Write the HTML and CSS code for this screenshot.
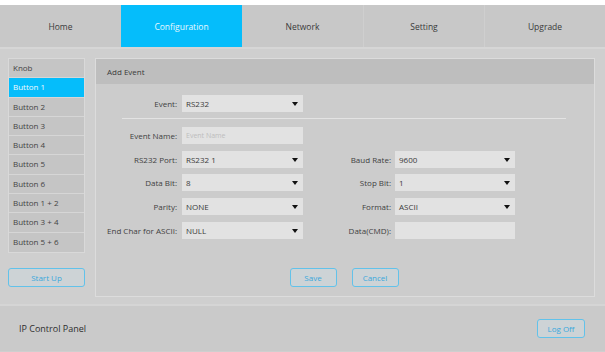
FILE: index.html
```html
<!DOCTYPE html>
<html lang="en">
<head>
    <meta charset="UTF-8">
    <meta name="viewport" content="width=device-width, initial-scale=1.0">
    <title>IP Control Panel</title>
    <link rel="stylesheet" href="styles.css">
</head>
<body>
    <div class="nav">
        <a href="#" class="nav-item">Home</a>
        <a href="#" class="nav-item active">Configuration</a>
        <a href="#" class="nav-item">Network</a>
        <a href="#" class="nav-item">Setting</a>
        <a href="#" class="nav-item">Upgrade</a>
    </div>
    <div class="main">
        <div class="side">
            <div class="side-list">
                <div class="side-item">Knob</div>
                <div class="side-item active">Button 1</div>
                <div class="side-item">Button 2</div>
                <div class="side-item">Button 3</div>
                <div class="side-item">Button 4</div>
                <div class="side-item">Button 5</div>
                <div class="side-item">Button 6</div>
                <div class="side-item">Button 1 + 2</div>
                <div class="side-item">Button 3 + 4</div>
                <div class="side-item">Button 5 + 6</div>
            </div>
            <a href="#" class="btn btn-start">Start Up</a>
        </div>
        <div class="panel">
            <div class="panel-head">Add Event</div>
            <div class="panel-body">
                <div class="form event-row">
                    <label class="lbl">Event:</label>
                    <div class="sel">RS232</div>
                </div>
                <div class="sep"></div>
                <div class="form">
                    <label class="lbl">Event Name:</label>
                    <div class="inp placeholder">Event Name</div>
                    <span></span>
                    <span></span>

                    <label class="lbl">RS232 Port:</label>
                    <div class="sel">RS232 1</div>
                    <label class="lbl lbl-r">Baud Rate:</label>
                    <div class="sel">9600</div>

                    <label class="lbl">Data Bit:</label>
                    <div class="sel">8</div>
                    <label class="lbl lbl-r">Stop Bit:</label>
                    <div class="sel">1</div>

                    <label class="lbl">Parity:</label>
                    <div class="sel">NONE</div>
                    <label class="lbl lbl-r">Format:</label>
                    <div class="sel">ASCII</div>

                    <label class="lbl">End Char for ASCII:</label>
                    <div class="sel">NULL</div>
                    <label class="lbl lbl-r">Data(CMD):</label>
                    <div class="inp"></div>
                </div>
                <div class="actions">
                    <a href="#" class="btn">Save</a>
                    <a href="#" class="btn">Cancel</a>
                </div>
            </div>
        </div>
    </div>
    <div class="footer">
        <span class="footer-title">IP Control Panel</span>
        <a href="#" class="btn btn-logoff">Log Off</a>
    </div>
</body>
</html>
```

FILE: styles.css
```css
* {
    margin: 0;
    padding: 0;
    box-sizing: border-box;
}
body {
    background-color: #cfcfcf;
    font-family: "Open Sans", "Noto Sans", sans-serif;
    font-size: 8px;
    color: #444;
    padding-top: 5px;
    background-image: linear-gradient(#fff 5px, transparent 5px);
    height: 352px;
    overflow: hidden;
}
a {
    text-decoration: none;
}

/* top nav */
.nav {
    display: grid;
    grid-template-columns: repeat(5, 1fr);
    height: 44px;
    background-color: #c8c8c8;
    border-bottom: 2px solid #d6d6d6;
}
.nav-item {
    display: flex;
    align-items: center;
    justify-content: center;
    color: #3a3a3a;
    font-size: 8.5px;
    border-left: 1px solid #cfcfcf;
}
.nav-item:first-child {
    border-left: 0;
}
.nav-item.active {
    background-color: #05bdfb;
    color: #e8f8ff;
    border-left: 0;
}
.nav-item.active + .nav-item {
    border-left: 0;
}

/* body */
.main {
    display: flex;
    gap: 10px;
    padding: 9px 10px 0 8px;
    height: 255px;
}
.side {
    width: 77px;
}
.side-list {
    border: 1px solid #d9d9d9;
}
.side-item {
    height: 19.3px;
    line-height: 18px;
    padding-left: 4px;
    background-color: #c5c5c5;
    border-bottom: 1px solid #d6d6d6;
}
.side-item:last-child {
    border-bottom: 0;
}
.side-item.active {
    background-color: #05bdfb;
    color: #f0faff;
}

.btn {
    display: inline-flex;
    align-items: center;
    justify-content: center;
    width: 47px;
    height: 19px;
    border: 1px solid #62c2ea;
    border-radius: 3px;
    color: #3aa8dc;
    font-size: 8px;
    background-color: #cdd3d6;
}
.btn-start {
    width: 77px;
    margin-top: 15px;
}

.panel {
    flex: 1;
    border: 1px solid #dcdcdc;
    background-color: #cccccc;
    height: 239px;
}
.panel-head {
    height: 25px;
    line-height: 25px;
    padding-left: 11px;
    background-color: #bebebe;
    color: #3a3a3a;
}
.panel-body {
    padding-top: 11px;
}

.form {
    display: grid;
    grid-template-columns: 86px 121px 92px 120px;
    row-gap: 6.7px;
    align-items: center;
}
.lbl {
    text-align: right;
    padding-right: 5px;
    color: #3f3f3f;
}
.lbl-r {
    padding-right: 4px;
}
.sel,
.inp {
    position: relative;
    height: 17px;
    line-height: 17px;
    padding-left: 4px;
    background-color: #e2e2e2;
    color: #3a3a3a;
}
.sel::after {
    content: "";
    position: absolute;
    right: 5px;
    top: 7px;
    border-left: 3.5px solid transparent;
    border-right: 3.5px solid transparent;
    border-top: 4px solid #111;
}
.placeholder {
    color: #bdbdbd;
    font-size: 7px;
}
.sep {
    height: 1px;
    background-color: #e3e3e3;
    margin: 6px 28px 8px 26px;
}
.actions {
    display: flex;
    gap: 15px;
    justify-content: center;
    margin-top: 29px;
    padding-right: 2px;
}

/* footer */
.footer {
    display: flex;
    justify-content: space-between;
    align-items: center;
    border-top: 2px solid #d5d5d5;
    background-color: #cacaca;
    height: 47px;
    padding: 0 20px 0 19px;
}
.footer-title {
    font-size: 9px;
    color: #2e2e2e;
}
.btn-logoff {
    width: 48px;
}
```
